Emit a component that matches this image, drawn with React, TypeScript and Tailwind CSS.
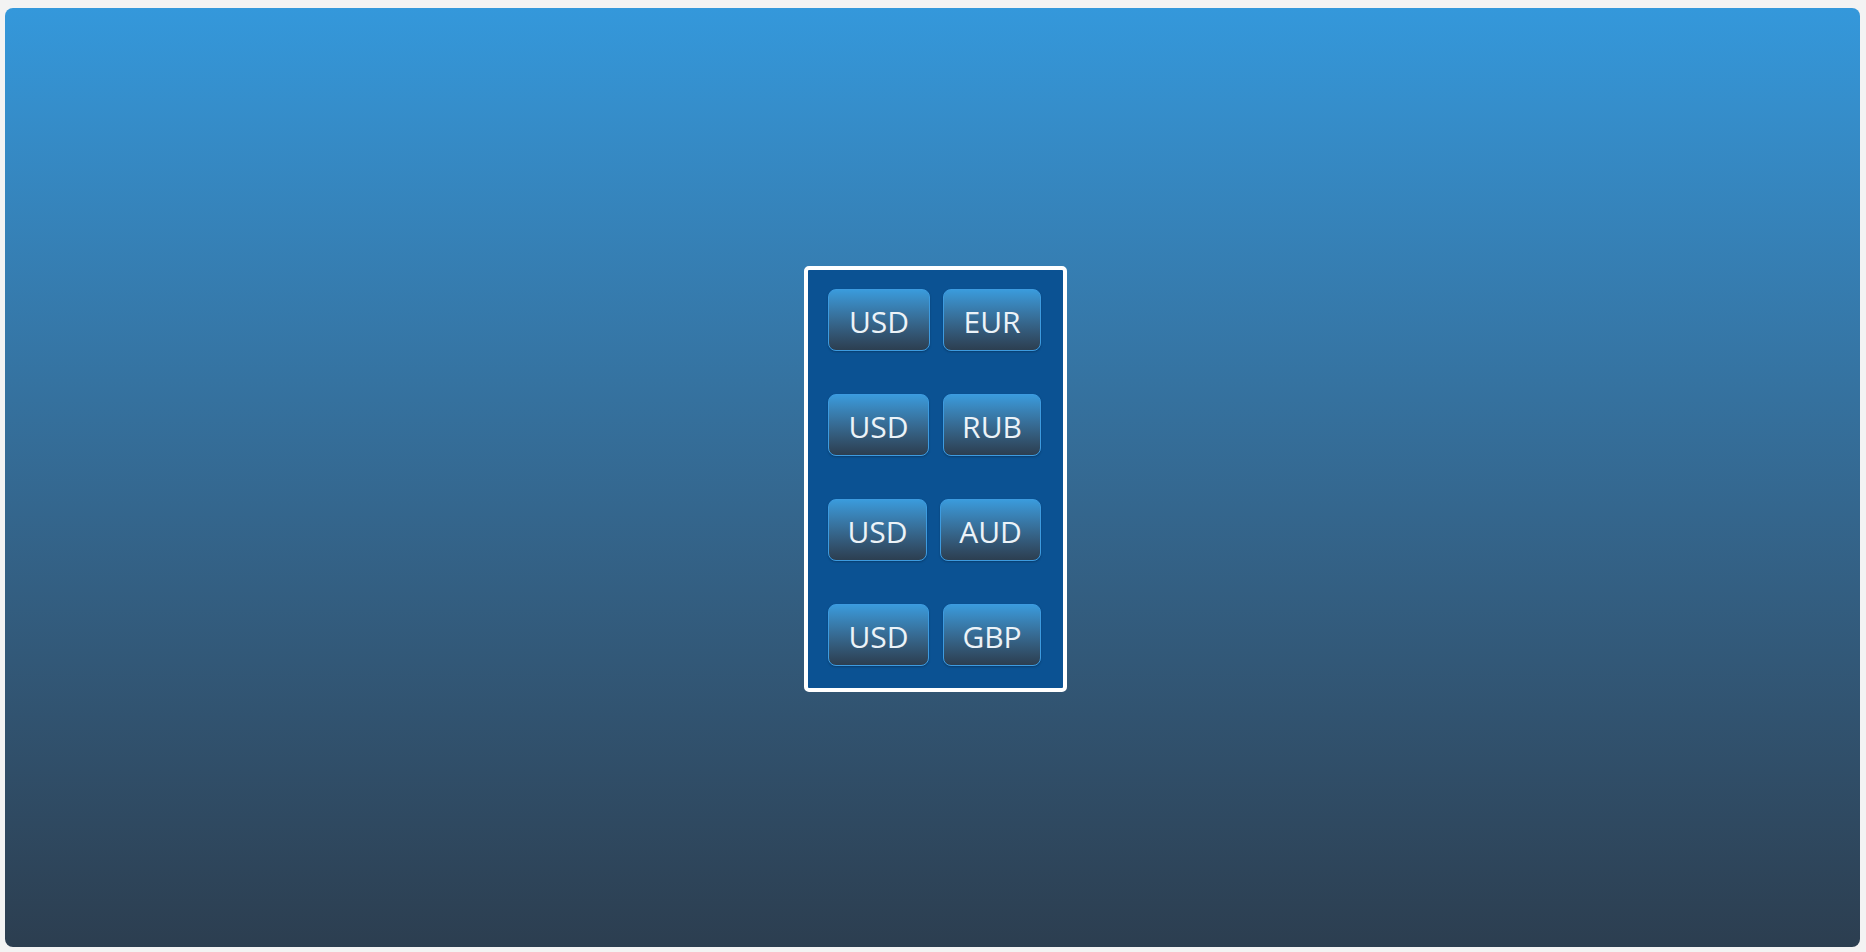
import React from "react";

const rows: { label: string; w: string }[][] = [
  [
    { label: "USD", w: "w-[102px]" },
    { label: "EUR", w: "w-[98px]" },
  ],
  [
    { label: "USD", w: "w-[101px]" },
    { label: "RUB", w: "w-[98px]" },
  ],
  [
    { label: "USD", w: "w-[99px]" },
    { label: "AUD", w: "w-[101px]" },
  ],
  [
    { label: "USD", w: "w-[101px]" },
    { label: "GBP", w: "w-[98px]" },
  ],
];

function CurrencyButton({ label, w }: { label: string; w: string }) {
  return (
    <button
      className={`${w} h-[62px] rounded-[8px] border border-[#3d9be0] bg-gradient-to-b from-[#3a9bdc] to-[#2c3e50] text-[30px] leading-none text-[#ecf3f8] pt-[4px] shadow-[0_1px_2px_rgba(0,0,0,0.25)]`}
      style={{ fontFamily: '"Open Sans", "Noto Sans", sans-serif' }}
    >
      {label}
    </button>
  );
}

export default function App() {
  return (
    <div className="w-[1866px] h-[952px] bg-[#f3f3f3] pt-[8px] pl-[5px] pr-[6px] pb-[5px]">
      <div className="w-full h-full rounded-[8px] bg-gradient-to-b from-[#3498db] to-[#2c3e50] flex items-center justify-center">
        <div className="w-[263px] h-[426px] border-[4px] border-white rounded-[5px] bg-[#0b5293] pt-[19px] pl-[20px] pr-[22px] flex flex-col gap-[43px] ml-[6px] mt-[3px]">
          {rows.map((row, i) => (
            <div key={i} className="flex justify-between">
              {row.map((b, j) => (
                <CurrencyButton key={j} label={b.label} w={b.w} />
              ))}
            </div>
          ))}
        </div>
      </div>
    </div>
  );
}
